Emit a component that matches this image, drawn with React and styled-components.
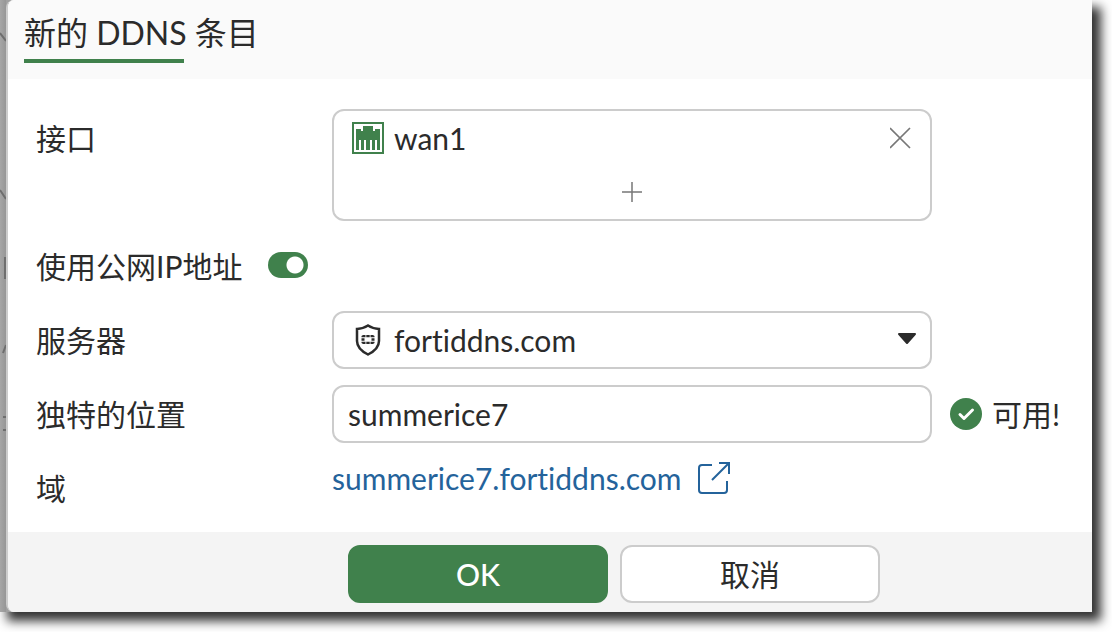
import React, { useState } from 'react';
import styled, { createGlobalStyle } from 'styled-components';

const GlobalStyle = createGlobalStyle`
  * {
    box-sizing: border-box;
  }

  body {
    margin: 0;
    background: #fff;
    color: #2b2b2b;
    font-family: Lato, 'Noto Sans CJK SC', sans-serif;
    font-size: 30px;
    font-variant-ligatures: none;
    line-height: 40px;
  }
`;

const Page = styled.div`
  padding: 0 20px 20px 0;
`;

const Frame = styled.div`
  display: flex;
  background: #a0a0a0;
  box-shadow: 8px 8px 10px 1px rgba(0, 0, 0, 0.8);
`;

const Backdrop = styled.div`
  flex: 0 0 6px;
  background: linear-gradient(to right, #a6a6a6, #969696);

  svg {
    display: block;
  }
`;

const Dialog = styled.form`
  flex: 1;
  min-width: 0;
  overflow: hidden;
  background: #fff;
  border-left: 2px solid #ccc;
  border-radius: 8px 0 0 8px;
`;

const Header = styled.header`
  padding: 11px 16px 16px;
  background: #fafafa;
`;

const Title = styled.h1`
  margin: 0;
  font-size: 32px;
  font-weight: 400;
  line-height: 44px;

  &::after {
    content: '';
    display: block;
    width: 160px;
    height: 4px;
    margin-top: 4px;
    background: #40814c;
  }
`;

const Fields = styled.div`
  display: flex;
  flex-direction: column;
  gap: 16px;
  padding: 30px 28px 15px;
`;

const Row = styled.div`
  display: flex;
  align-items: flex-start;
  min-height: 58px;
`;

const Label = styled.label`
  flex: 0 0 ${(props) => props.$width || 296}px;
  padding-top: 9px;
`;

const Control = styled.div`
  position: relative;
  flex: 0 1 600px;
  min-width: 0;
`;

const Box = styled.div`
  height: 112px;
  padding: 7px 18px;
  border: 2px solid #ccc;
  border-radius: 12px;
`;

const Entry = styled.div`
  display: flex;
  align-items: center;
  gap: 10px;

  span {
    flex: 1;
  }
`;

const IconButton = styled.button`
  display: block;
  margin: ${(props) => (props.$centered ? '24px auto 0' : '0')};
  padding: 0;
  border: 0;
  background: none;
  color: #777;
  cursor: pointer;

  svg {
    display: block;
  }
`;

const Switch = styled.input`
  appearance: none;
  width: 40px;
  height: 26px;
  margin: 15px 0 0;
  border-radius: 13px;
  background: radial-gradient(circle at 13px 13px, #fff 8px, #999 9px);
  cursor: pointer;

  &:checked {
    background: radial-gradient(circle at 27px 13px, #fff 8px, #40814c 9px);
  }
`;

const Select = styled.select`
  appearance: none;
  display: block;
  width: 100%;
  height: 58px;
  padding: 0 48px 0 60px;
  border: 2px solid #ccc;
  border-radius: 12px;
  background: #fff;
  color: inherit;
  font: inherit;
`;

const SelectIcon = styled.svg`
  position: absolute;
  top: ${(props) => props.$top}px;
  left: ${(props) => props.$left || 'auto'};
  right: ${(props) => props.$right || 'auto'};
  pointer-events: none;
`;

const TextInput = styled.input`
  display: block;
  width: 100%;
  height: 58px;
  padding: 0 14px;
  border: 2px solid #ccc;
  border-radius: 12px;
  background: #fff;
  color: inherit;
  font: inherit;
`;

const Status = styled.div`
  display: flex;
  align-items: center;
  gap: 10px;
  height: 58px;
  margin-left: 18px;
  white-space: nowrap;
`;

const DomainLink = styled.a`
  display: flex;
  align-items: center;
  gap: 16px;
  color: #24639b;
  line-height: 38px;
  text-decoration: none;
`;

const Footer = styled.footer`
  display: flex;
  justify-content: center;
  gap: 12px;
  padding: 13px 0 9px 128px;
  background: #f4f4f4;
`;

const Button = styled.button`
  width: 260px;
  height: 58px;
  padding: 0;
  border: 2px solid ${(props) => (props.$primary ? '#40814c' : '#ccc')};
  border-radius: 12px;
  background: ${(props) => (props.$primary ? '#40814c' : '#fff')};
  color: ${(props) => (props.$primary ? '#fff' : 'inherit')};
  font: inherit;
  font-weight: ${(props) => (props.$primary ? 500 : 400)};
  cursor: pointer;
`;

function PortIcon() {
  return (
    <svg width="32" height="32" viewBox="0 0 32 32" aria-hidden="true">
      <path fill="#40814c" fillRule="evenodd" d="M0 0h32v32H0zM2 2v28h28V2z" />
      <path fill="#40814c" d="M4 7h5v2h2V4h10v5h2V7h5v21h-3V18h-2v10h-3V18h-2v10h-4V18h-2v10H9V18H7v10H4z" />
    </svg>
  );
}

function CheckIcon() {
  return (
    <svg width="32" height="32" viewBox="0 0 32 32" aria-hidden="true">
      <circle cx="16" cy="16" r="16" fill="#40814c" />
      <path d="M10 16.500l4 4 8.500-8.500" fill="none" stroke="#fff" strokeWidth="3" strokeLinecap="round" strokeLinejoin="round" />
    </svg>
  );
}

function App() {
  const [publicIp, setPublicIp] = useState(true);
  const [location, setLocation] = useState('summerice7');

  return (
    <>
      <GlobalStyle />
      <Page>
        <Frame>
          <Backdrop>
            <svg width="6" height="612" viewBox="0 0 6 612" fill="none" stroke="#6e6e6e" strokeWidth="2" aria-hidden="true">
              <path d="M0 33l6 8M0 190l6 9M5 257v22M3 353l3-8M3 417h3M3 430h3" />
            </svg>
          </Backdrop>
          <Dialog onSubmit={(e) => e.preventDefault()}>
            <Header>
              <Title>新的 DDNS 条目</Title>
            </Header>
            <Fields>
              <Row>
                <Label as="div">接口</Label>
                <Control>
                  <Box>
                    <Entry>
                      <PortIcon />
                      <span>wan1</span>
                      <IconButton type="button" aria-label="移除">
                        <svg width="22" height="22" viewBox="0 0 22 22" fill="none" stroke="currentColor" strokeWidth="1.700">
                          <path d="M0 1l20 20M20 1L0 21" />
                        </svg>
                      </IconButton>
                    </Entry>
                    <IconButton type="button" aria-label="添加" $centered>
                      <svg width="20" height="20" viewBox="0 0 20 20" fill="none" stroke="currentColor" strokeWidth="1.500">
                        <path d="M10 0v20M0 10h20" />
                      </svg>
                    </IconButton>
                  </Box>
                </Control>
              </Row>
              <Row>
                <Label htmlFor="public-ip" $width={232}>使用公网IP地址</Label>
                <Switch
                  id="public-ip"
                  type="checkbox"
                  checked={publicIp}
                  onChange={(e) => setPublicIp(e.target.checked)}
                />
              </Row>
              <Row>
                <Label htmlFor="server">服务器</Label>
                <Control>
                  <Select id="server" defaultValue="fortiddns.com">
                    <option>fortiddns.com</option>
                  </Select>
                  <SelectIcon $top={13} $left="23px" width="26" height="32" viewBox="0 0 26 32" aria-hidden="true">
                    <path d="M13 1.500C10 3.500 6 4.800 2 5v12c0 6 5 10.500 11 13.500C19 27.500 24 23 24 17V5C20 4.800 16 3.500 13 1.500z" fill="none" stroke="#2b2b2b" strokeWidth="2.500" />
                    <path d="M8 11h2.500v2.300H6.500V12zM11.300 11h3.400v2.300h-3.400zM15.500 11H18l1.500 1v1.300h-4zM6.500 14.200h3v2.600h-3zM16.500 14.200h3v2.600h-3zM6.500 17.700h4V20H8l-1.500-1zM11.300 17.700h3.400V20h-3.400zM15.500 17.700h4V19L18 20h-2.500z" fill="#2b2b2b" />
                  </SelectIcon>
                  <SelectIcon $top={22} $right="15px" width="20" height="12" viewBox="0 0 20 12" aria-hidden="true">
                    <path d="M2 1h16L10 10z" fill="#2b2b2b" stroke="#2b2b2b" strokeWidth="2" strokeLinejoin="round" />
                  </SelectIcon>
                </Control>
              </Row>
              <Row>
                <Label htmlFor="location">独特的位置</Label>
                <Control>
                  <TextInput
                    id="location"
                    value={location}
                    onChange={(e) => setLocation(e.target.value)}
                  />
                </Control>
                <Status>
                  <CheckIcon />
                  可用!
                </Status>
              </Row>
              <Row>
                <Label as="div">域</Label>
                <DomainLink href="#domain">
                  summerice7.fortiddns.com
                  <svg width="34" height="34" viewBox="0 0 34 34" fill="none" stroke="currentColor" strokeWidth="2" aria-hidden="true">
                    <path d="M15 4H5a3 3 0 0 0-3 3v22a3 3 0 0 0 3 3h22a3 3 0 0 0 3-3V20M22 2h10v11M32 2L15 19" />
                  </svg>
                </DomainLink>
              </Row>
            </Fields>
            <Footer>
              <Button type="submit" $primary>OK</Button>
              <Button type="button">取消</Button>
            </Footer>
          </Dialog>
        </Frame>
      </Page>
    </>
  );
}

export default App;
